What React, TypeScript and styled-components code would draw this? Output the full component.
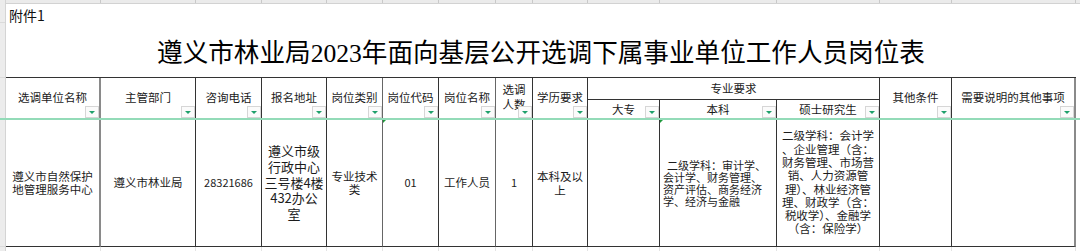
import React from 'react';
import styled, { createGlobalStyle } from 'styled-components';

const COLS = [95, 95, 66, 65, 56, 56, 57, 37, 55, 72, 117, 103, 72, 124];
const colTemplate = COLS.map((w) => `${w}px`).join(' ');
const TABLE_W = COLS.reduce((a, b) => a + b, 0);

const GlobalStyle = createGlobalStyle`
  html, body { margin: 0; padding: 0; background: #fff; }
  body { font-family: "Noto Sans CJK SC", "Noto Sans", sans-serif; color: #1c1c1c; }
  #root { width: 1080px; height: 251px; overflow: hidden; }
`;

const Page = styled.div`
  position: relative;
  display: flex;
  width: 1080px;
  height: 251px;
  overflow: hidden;
  background: #fff;
`;

const Gutter = styled.div`
  flex: none;
  width: 5px;
  background: #ececec;
  border-right: 1px solid #d4d4d4;
  display: flex;
  flex-direction: column;
`;

const GutterRow = styled.div<{ $h: number }>`
  flex: none;
  height: ${(p) => p.$h}px;
  box-sizing: border-box;
  border-bottom: 1px solid #dadada;
`;

const Sheet = styled.div`
  flex: 1;
  display: flex;
  flex-direction: column;
`;

const TopStrip = styled.div`
  display: grid;
  grid-template-columns: ${colTemplate} 1fr;
  height: 3px;
  background: #ebebeb;
  border-bottom: 1px solid #d2d2d2;
`;

const StripCell = styled.div`
  border-right: 1px solid #c9c9c9;
`;

const TitleArea = styled.div`
  width: ${TABLE_W}px;
  height: 73px;
  display: flex;
  flex-direction: column;
`;

const Attachment = styled.div`
  font-size: 14px;
  line-height: 18px;
  padding: 2px 0 0 3px;
  color: #111;
`;

const Title = styled.h1`
  margin: 13px 0 0;
  font-family: "Liberation Serif", "Noto Sans CJK SC", serif;
  font-weight: 400;
  font-size: 25.6px;
  line-height: 34px;
  text-align: center;
  color: #000;
`;

const Table = styled.div`
  display: grid;
  width: ${TABLE_W}px;
  grid-template-columns: ${colTemplate};
  grid-template-rows: 22px 19px 128px;
  border-top: 1px solid #333;
`;

const Cell = styled.div<{
  $rows?: number;
  $cols?: number;
  $line?: string;
  $bw?: number;
}>`
  position: relative;
  box-sizing: border-box;
  grid-row: span ${(p) => p.$rows ?? 1};
  grid-column: span ${(p) => p.$cols ?? 1};
  border-right: ${(p) => p.$bw ?? 1}px solid ${(p) => p.$line ?? '#333'};
  border-bottom: 1px solid #333;
  display: flex;
  align-items: center;
  justify-content: center;
  text-align: center;
  overflow: hidden;
`;

const HeadCell = styled(Cell)`
  font-size: 11.5px;
  line-height: 15px;
  color: #1a1a1a;
`;

const HeadText = styled.span<{ $shift?: number }>`
  position: relative;
  top: ${(p) => p.$shift ?? 0}px;
  white-space: nowrap;
`;

const Filter = styled.span`
  position: absolute;
  right: 0;
  bottom: 0;
  width: 14px;
  height: 12px;
  box-sizing: border-box;
  background: #fbfbfb;
  border: 1px solid #d6d6d6;
  &::after {
    content: '';
    position: absolute;
    left: 3px;
    top: 4px;
    border-left: 3px solid transparent;
    border-right: 3px solid transparent;
    border-top: 3px solid #1fa06b;
  }
`;

const DataCell = styled(Cell)<{
  $fs?: number;
  $lh?: number;
  $align?: 'left' | 'center';
  $flag?: boolean;
}>`
  font-size: ${(p) => p.$fs ?? 11.5}px;
  line-height: ${(p) => p.$lh ?? 13}px;
  color: #1c1c1c;
  justify-content: ${(p) => (p.$align === 'left' ? 'flex-start' : 'center')};
  text-align: ${(p) => p.$align ?? 'center'};
  padding-left: ${(p) => (p.$align === 'left' ? 3 : 0)}px;
  white-space: nowrap;
  &::before {
    content: '';
    display: ${(p) => (p.$flag ? 'block' : 'none')};
    position: absolute;
    left: 0;
    top: 0;
    border-top: 4px solid #1f9a3c;
    border-right: 4px solid transparent;
  }
`;

const Line = styled.span<{ $indent?: number }>`
  display: block;
  padding-left: ${(p) => p.$indent ?? 0}px;
`;

const BottomStrip = styled.div`
  display: grid;
  grid-template-columns: ${colTemplate} 1fr;
  flex: 1;
`;

const BottomCell = styled.div`
  border-right: 1px solid #e4e4e4;
`;

const FreezeLine = styled.div`
  position: absolute;
  left: 0;
  right: 0;
  top: 118px;
  height: 2px;
  background: #93dbb8;
`;

type Head = { lines: string[]; rows?: number; cols?: number; filter?: boolean; line?: string; bw?: number };

const heads: Head[] = [
  { lines: ['选调单位名称'], rows: 2, filter: true, line: '#8a8a8a', bw: 2 },
  { lines: ['主管部门'], rows: 2, filter: true },
  { lines: ['咨询电话'], rows: 2, filter: true },
  { lines: ['报名地址'], rows: 2, filter: true },
  { lines: ['岗位类别'], rows: 2, filter: true, line: '#666' },
  { lines: ['岗位代码'], rows: 2, filter: true },
  { lines: ['岗位名称'], rows: 2, filter: true, line: '#666' },
  { lines: ['选调', '人数'], rows: 2, filter: true },
  { lines: ['学历要求'], rows: 2, filter: true },
  { lines: ['专业要求'], cols: 3 },
  { lines: ['其他条件'], rows: 2, filter: true },
  { lines: ['需要说明的其他事项'], rows: 2, filter: true, line: '#8a8a8a', bw: 2 },
  { lines: ['大专'], filter: true },
  { lines: ['本科'], filter: true },
  { lines: ['硕士研究生'], filter: true },
];

type Datum = {
  lines: string[];
  fs?: number;
  lh?: number;
  align?: 'left' | 'center';
  flag?: boolean;
  line?: string;
  bw?: number;
  indent?: number;
};

const data: Datum[] = [
  { lines: ['遵义市自然保护', '地管理服务中心'], lh: 12.5, line: '#8a8a8a', bw: 2 },
  { lines: ['遵义市林业局'] },
  { lines: ['28321686'], fs: 11 },
  { lines: ['遵义市级', '行政中心', '三号楼4楼', '432办公', '室'], fs: 13, lh: 15.8 },
  { lines: ['专业技术', '类'], lh: 13, line: '#666' },
  { lines: ['01'], fs: 11, flag: true },
  { lines: ['工作人员'], line: '#666' },
  { lines: ['1'], fs: 11 },
  { lines: ['本科及以', '上'], lh: 14 },
  { lines: [] },
  {
    lines: ['二级学科：审计学、', '会计学、财务管理、', '资产评估、商务经济', '学、经济与金融'],
    align: 'left',
    fs: 11,
    lh: 12,
    flag: true,
    indent: 4,
  },
  {
    lines: [
      '二级学科：会计学',
      '、企业管理（含：',
      '财务管理、市场营',
      '销、人力资源管',
      '理）、林业经济管',
      '理、财政学（含：',
      '税收学）、金融学',
      '（含：保险学）',
    ],
    lh: 13.3,
  },
  { lines: [] },
  { lines: [], line: '#8a8a8a', bw: 2 },
];

export default function App() {
  return (
    <>
      <GlobalStyle />
      <Page>
        <Gutter>
          <GutterRow $h={23} />
          <GutterRow $h={55} />
          <GutterRow $h={41} />
          <GutterRow $h={128} />
        </Gutter>
        <Sheet>
          <TopStrip>
            {COLS.map((_, i) => (
              <StripCell key={i} />
            ))}
          </TopStrip>
          <TitleArea>
            <Attachment>附件1</Attachment>
            <Title>遵义市林业局2023年面向基层公开选调下属事业单位工作人员岗位表</Title>
          </TitleArea>
          <Table>
            {heads.map((h) => (
              <HeadCell key={h.lines.join('')} $rows={h.rows} $cols={h.cols} $line={h.line} $bw={h.bw}>
                <HeadText $shift={h.rows === 2 ? -1 : 0}>
                  {h.lines.map((l, j) => (
                    <Line key={j}>{l}</Line>
                  ))}
                </HeadText>
                {h.filter && <Filter />}
              </HeadCell>
            ))}
            {data.map((d, i) => (
              <DataCell
                key={i}
                $fs={d.fs}
                $lh={d.lh}
                $align={d.align}
                $flag={d.flag}
                $line={d.line}
                $bw={d.bw}
              >
                {d.lines.length > 0 && (
                  <div>
                    {d.lines.map((l, j) => (
                      <Line key={j} $indent={j === 0 ? d.indent : 0}>
                        {l}
                      </Line>
                    ))}
                  </div>
                )}
              </DataCell>
            ))}
          </Table>
          <BottomStrip>
            {COLS.map((_, i) => (
              <BottomCell key={i} />
            ))}
          </BottomStrip>
        </Sheet>
        <FreezeLine />
      </Page>
    </>
  );
}
